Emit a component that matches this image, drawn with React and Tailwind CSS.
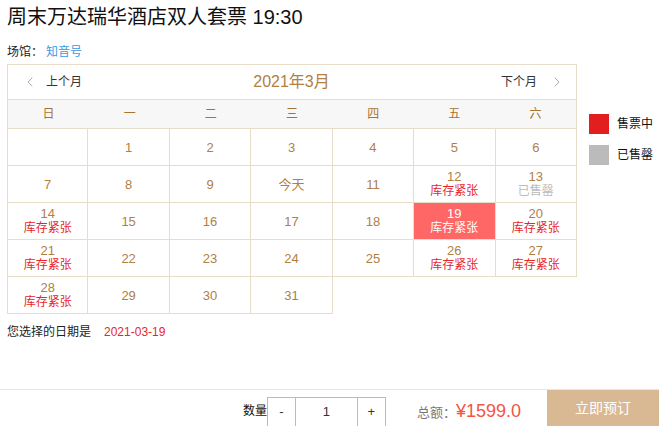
import React from "react";
import { ChevronLeft, ChevronRight } from "lucide-react";

const font = { fontFamily: '"Liberation Sans", "Noto Sans CJK SC", sans-serif' };

const weekdays = ["日", "一", "二", "三", "四", "五", "六"];

// null = empty cell
const days = [
  null,
  { d: "1" }, { d: "2" }, { d: "3" }, { d: "4" }, { d: "5" }, { d: "6" },
  { d: "7" }, { d: "8" }, { d: "9" }, { d: "今天" }, { d: "11" },
  { d: "12", tag: "库存紧张" }, { d: "13", tag: "已售罄", sold: true },
  { d: "14", tag: "库存紧张" }, { d: "15" }, { d: "16" }, { d: "17" }, { d: "18" },
  { d: "19", tag: "库存紧张", selected: true }, { d: "20", tag: "库存紧张" },
  { d: "21", tag: "库存紧张" }, { d: "22" }, { d: "23" }, { d: "24" }, { d: "25" },
  { d: "26", tag: "库存紧张" }, { d: "27", tag: "库存紧张" },
  { d: "28", tag: "库存紧张" }, { d: "29" }, { d: "30" }, { d: "31" },
];

const DayCell = ({ day, idx }) => {
  const first = idx % 7 === 0;
  const base =
    "h-[37px] border-r border-b border-[#e8dccb] flex flex-col items-center justify-center " +
    (first ? "border-l " : "");
  if (!day) return <div className={base} />;
  if (day.selected) {
    return (
      <div className={base + "bg-[#ff6666] text-white"}>
        <span className="text-[13px] leading-[15px]">{day.d}</span>
        <span className="text-[12px] leading-[15px]">{day.tag}</span>
      </div>
    );
  }
  return (
    <div className={base}>
      <span className="text-[13px] leading-[15px] text-[#b08046]">{day.d}</span>
      {day.tag && (
        <span
          className={
            "text-[12px] leading-[15px] " +
            (day.sold ? "text-[#bbbbbb]" : "text-[#e8262a]")
          }
        >
          {day.tag}
        </span>
      )}
    </div>
  );
};

const App = () => {
  return (
    <div className="h-screen flex flex-col bg-white text-[#222] overflow-hidden" style={font}>
      <div className="px-[7px]">
        <h1 className="pt-[4px] text-[20px] leading-[26px] text-[#111]">
          周末万达瑞华酒店双人套票 19:30
        </h1>
        <div className="mt-[13px] text-[12px] leading-[18px]">
          场馆：<span className="ml-[3px] text-[#3a9ae0]">知音号</span>
        </div>

        <div className="mt-[3px] flex">
          <div className="w-[570px] shrink-0">
            <div className="h-[36px] border border-[#e8dccb] flex items-center justify-between pl-[14px] pr-[11px]">
              <div className="flex items-center gap-[8px] text-[12px] text-[#333]">
                <ChevronLeft size={16} strokeWidth={1.5} className="text-[#aaa]" />
                上个月
              </div>
              <div className="text-[16px] text-[#b08046]">2021年3月</div>
              <div className="flex items-center gap-[12px] text-[12px] text-[#333]">
                下个月
                <ChevronRight size={16} strokeWidth={1.5} className="text-[#aaa]" />
              </div>
            </div>
            <div className="h-[29px] grid grid-cols-7 bg-[#f7f7f7] border-x border-b border-[#e8dccb]">
              {weekdays.map((w) => (
                <div key={w} className="flex items-center justify-center text-[12px] text-[#a8722f]">
                  {w}
                </div>
              ))}
            </div>
            <div className="grid grid-cols-7">
              {days.map((day, idx) => (
                <DayCell key={idx} day={day} idx={idx} />
              ))}
            </div>
          </div>

          <div className="ml-[12px] pt-[50px] flex flex-col gap-[11px] shrink-0">
            <div className="flex items-center gap-[8px] text-[12px] text-[#111] whitespace-nowrap">
              <span className="w-[20px] h-[20px] shrink-0 bg-[#e21e1e]" />
              售票中
            </div>
            <div className="flex items-center gap-[8px] text-[12px] text-[#111] whitespace-nowrap">
              <span className="w-[20px] h-[20px] shrink-0 bg-[#bbbbbb]" />
              已售罄
            </div>
          </div>
        </div>

        <div className="mt-[9px] text-[12px] leading-[18px] flex">
          <span>您选择的日期是</span>
          <span className="ml-[13px] text-[#e8262a]">2021-03-19</span>
        </div>
      </div>

      <div className="mt-auto h-[37px] border-t border-[#e6e6e6] flex justify-end overflow-hidden">
        <div className="flex items-start">
          <span className="mt-[13px] text-[12px] leading-[16px] text-[#111]">数量</span>
          <div className="mt-[7px] h-[30px] flex border border-[#bbbbbb] text-[13px] text-[#333]">
            <div className="w-[28px] flex items-center justify-center border-r border-[#bbbbbb]">-</div>
            <div className="w-[61px] flex items-center justify-center">1</div>
            <div className="w-[28px] flex items-center justify-center border-l border-[#bbbbbb]">+</div>
          </div>
          <div className="ml-[31px] mt-[8px] flex items-baseline">
            <span className="text-[13px] text-[#777]">总额：</span>
            <span className="text-[18px] text-[#f5543f]">¥1599.0</span>
          </div>
          <button className="ml-[26px] w-[112px] h-[36px] bg-[#d9b993] text-white text-[14px]">
            立即预订
          </button>
        </div>
      </div>
    </div>
  );
};

export default App;
